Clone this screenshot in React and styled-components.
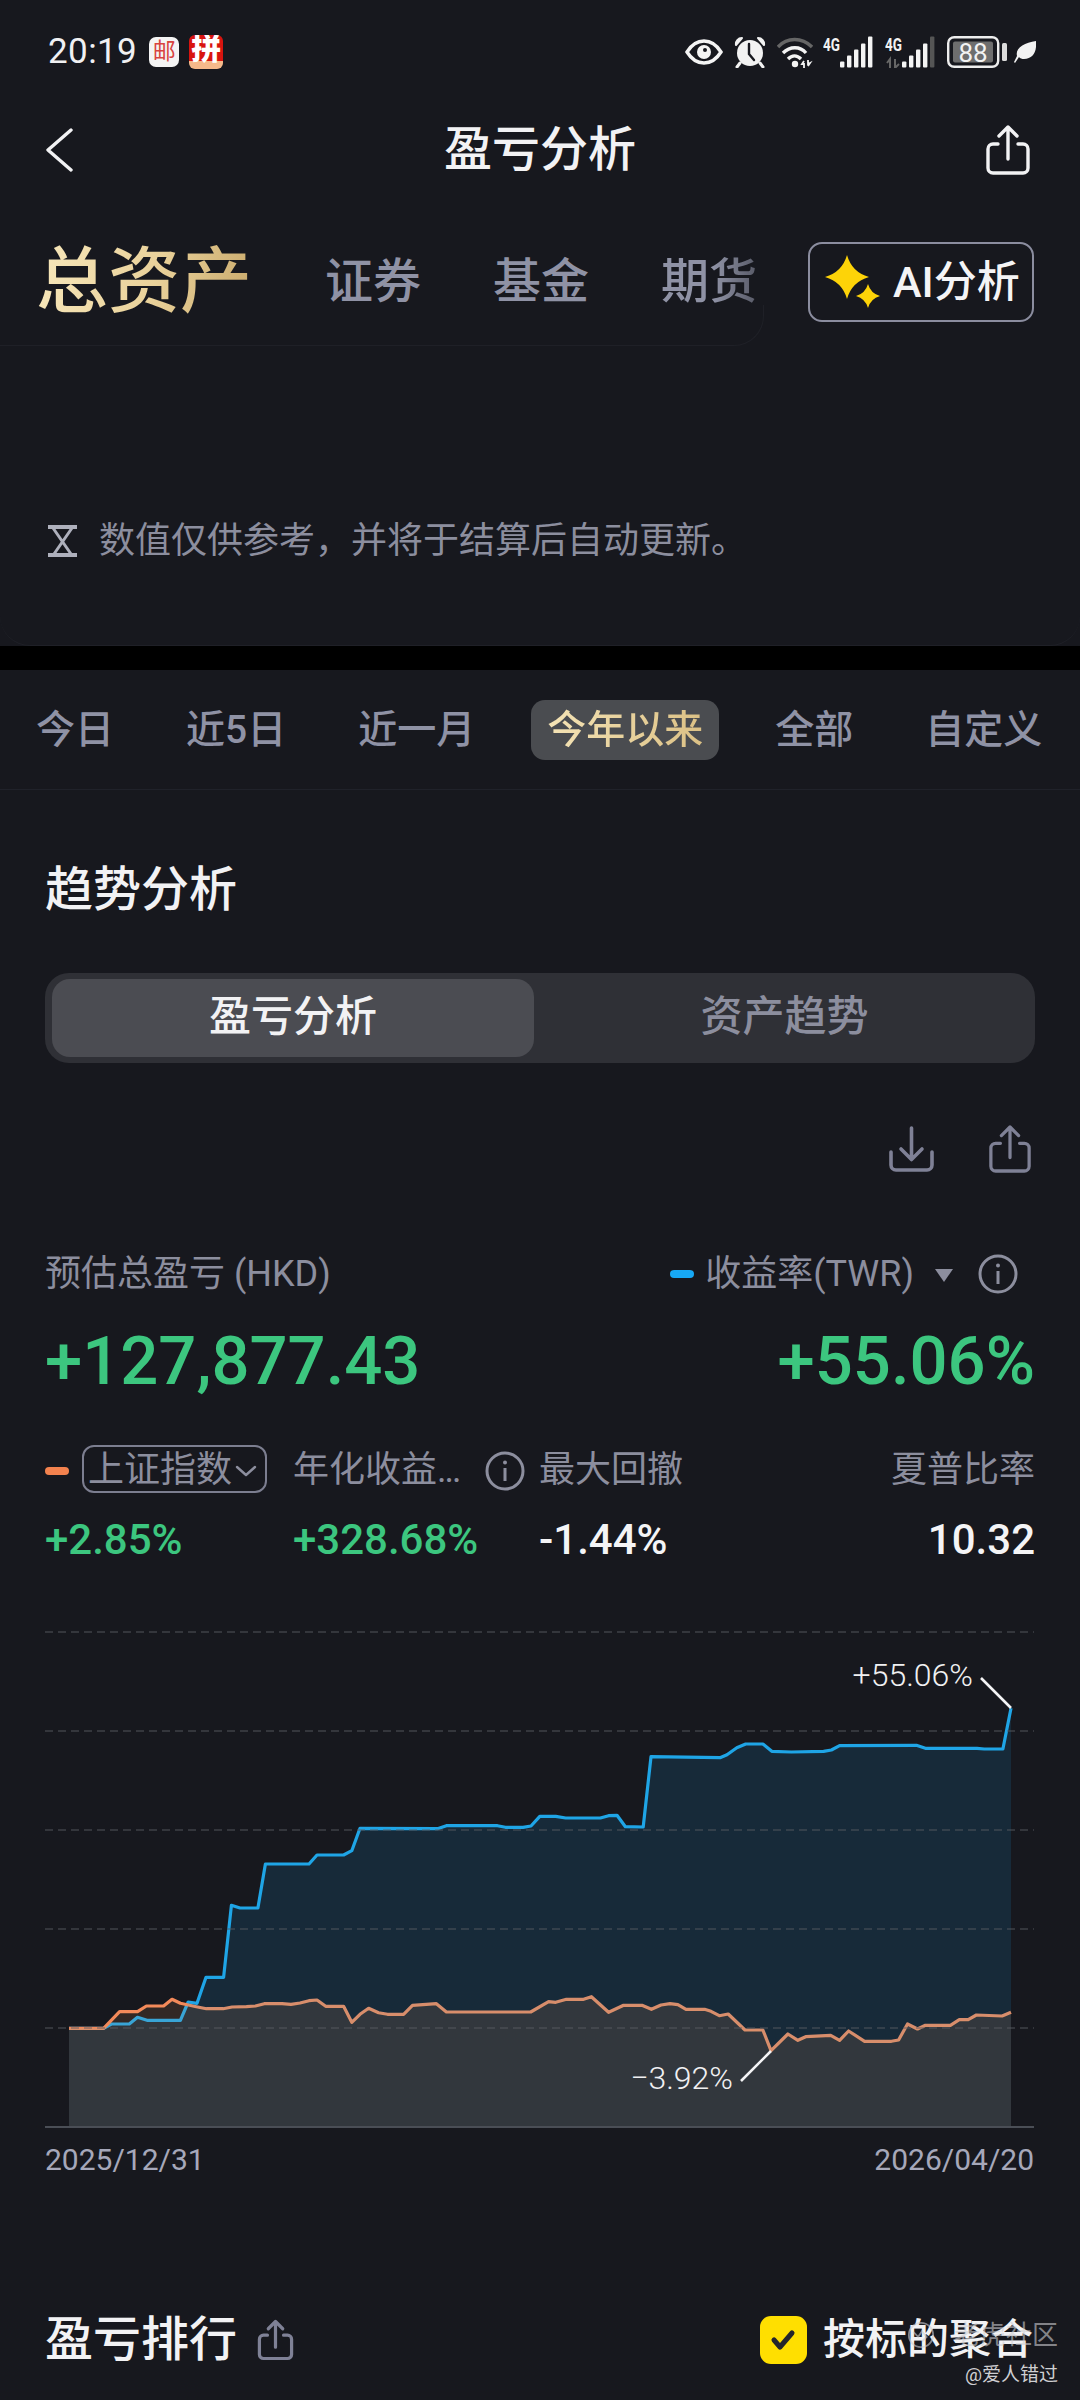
import React from "react";
import styled, { createGlobalStyle } from "styled-components";

const BG = "#17181e";
const Global = createGlobalStyle`
  html, body { margin: 0; padding: 0; background: ${BG}; }
  * { box-sizing: border-box; }
`;

const MUTED = "#8c8e9e";
const GREEN = "#3cc67f";
const EDGE = "#1f2027";

const Page = styled.div`
  position: relative;
  width: 1080px;
  height: 2400px;
  overflow: hidden;
  background: ${BG};
  color: #f2f2f4;
  font-family: Roboto, "Noto Sans CJK SC", sans-serif;
`;
const TopCard = styled.section`
  height: 646px;
  display: flex;
  flex-direction: column;
  border-bottom: 1px solid ${EDGE};
  border-bottom-left-radius: 30px;
  border-bottom-right-radius: 30px;
`;
const StatusBar = styled.div`
  height: 100px;
  display: flex;
  align-items: center;
  justify-content: space-between;
  padding: 4px 44px 0 48px;
`;
const StatusLeft = styled.div`
  display: flex;
  align-items: center;
`;
const Clock = styled.span`
  font-size: 35px;
  line-height: 40px;
  color: #f0f0f2;
  margin-right: 12px;
  letter-spacing: 0.4px;
`;
const MailApp = styled.span`
  width: 30px;
  height: 30px;
  border-radius: 7px;
  background: #f4f4f4;
  color: #d8433f;
  font-size: 23px;
  line-height: 30px;
  text-align: center;
  margin-right: 10px;
`;
const ShopApp = styled.span`
  width: 34px;
  height: 34px;
  border-radius: 6px;
  overflow: hidden;
  background: linear-gradient(#d8140f 0 76%, #f6b98a 76% 100%);
  color: #fff;
  font-size: 30px;
  line-height: 28px;
  font-weight: 900;
  text-align: center;
`;
const StatusIcons = styled.div`
  display: flex;
  align-items: center;
  gap: 10px;
`;
const LeafIcon = styled.svg`
  margin-left: -3px;
`;
const NavBar = styled.header`
  height: 100px;
  display: flex;
  align-items: center;
  justify-content: space-between;
  padding: 0 49px 0 45px;
  position: relative;
`;
const NavTitle = styled.h1`
  position: absolute;
  left: 0;
  right: 0;
  margin: 0;
  text-align: center;
  font-size: 48px;
  line-height: 60px;
  font-weight: 500;
  pointer-events: none;
`;
const TabsRow = styled.nav`
  position: relative;
  margin-top: 42px;
  height: 80px;
  display: flex;
  align-items: center;
  padding: 0 46px 0 36px;
  &::after {
    content: "";
    position: absolute;
    left: 0;
    bottom: -24px;
    width: 763px;
    height: 40px;
    border-bottom: 1px solid ${EDGE};
    border-right: 1px solid ${EDGE};
    border-bottom-right-radius: 30px;
    pointer-events: none;
  }
`;
const MainTab = styled.span`
  font-size: 72px;
  line-height: 80px;
  font-weight: 500;
  background: linear-gradient(100deg, #f7e7bb 0%, #e9d19a 55%, #c9a96b 100%);
  -webkit-background-clip: text;
  background-clip: text;
  color: transparent;
  margin-right: 73px;
`;
const SubTab = styled.span`
  font-size: 48px;
  line-height: 60px;
  font-weight: 500;
  color: #8f92a5;
  margin-right: 72px;
  white-space: nowrap;
  ${(p) => p.$fade && `
    -webkit-mask-image: linear-gradient(90deg, #000 55%, rgba(0,0,0,.55) 100%);
    mask-image: linear-gradient(90deg, #000 55%, rgba(0,0,0,.55) 100%);
    margin-right: 0;
  `}
`;
const AiButton = styled.button`
  margin-left: auto;
  width: 226px;
  height: 80px;
  border: 2px solid #8b8d9f;
  border-radius: 14px;
  background: transparent;
  display: flex;
  align-items: center;
  gap: 12px;
  padding: 0 0 0 15px;
  color: #f4f4f6;
  font: 500 43px/60px Roboto, "Noto Sans CJK SC", sans-serif;
`;
const NoteRow = styled.div`
  margin-top: 201px;
  height: 36px;
  display: flex;
  align-items: center;
  gap: 21px;
  padding-left: 47px;
  font-size: 36px;
  line-height: 36px;
  color: ${MUTED};
`;
const Band = styled.div`
  height: 24px;
  background: #000;
`;
const TimeTabs = styled.nav`
  height: 120px;
  display: flex;
  align-items: flex-start;
  gap: 40px;
  padding: 30px 0 0 20px;
  border-bottom: 1px solid #20222a;
  border-top-left-radius: 30px;
  border-top-right-radius: 30px;
`;
const TimeTab = styled.span`
  height: 60px;
  padding: 0 16px;
  border-radius: 14px;
  font-size: 39px;
  line-height: 60px;
  font-weight: 500;
  color: ${(p) => (p.$active ? "transparent" : "#8f92a5")};
  ${(p) => p.$active && `
    background: linear-gradient(90deg, #f7e7bb, #d9bd80) text, #4a4c50;
    -webkit-background-clip: text, border-box;
    background-clip: text, border-box;
  `}
`;
const Body = styled.div`
  padding: 0 45px;
`;
const SectionTitle = styled.h2`
  margin: 70px 0 0;
  font-size: 48px;
  line-height: 60px;
  font-weight: 500;
`;
const Segment = styled.div`
  margin-top: 53px;
  height: 90px;
  padding: 6px 0 6px 7px;
  border-radius: 24px;
  background: #2f3036;
  display: grid;
  grid-template-columns: 482px 1fr;
`;
const SegmentItem = styled.div`
  border-radius: 18px;
  height: 78px;
  background: ${(p) => (p.$active ? "#4b4c52" : "transparent")};
  color: ${(p) => (p.$active ? "#f2f2f4" : MUTED)};
  font-size: 42px;
  line-height: 76px;
  font-weight: 500;
  text-align: center;
`;
const ToolRow = styled.div`
  margin-top: 61px;
  height: 50px;
  display: flex;
  justify-content: flex-end;
  align-items: center;
  gap: 53px;
  padding-right: 3px;
`;
const SummaryLabels = styled.div`
  margin-top: 78px;
  height: 44px;
  display: flex;
  align-items: center;
  font-size: 36px;
  line-height: 44px;
  color: ${MUTED};
`;
const Dash = styled.i`
  display: block;
  width: 24px;
  height: 8px;
  border-radius: 4px;
  background: ${(p) => p.$color};
`;
const TwrLabel = styled.span`
  margin-left: 11px;
`;
const Caret = styled.span`
  width: 0;
  height: 0;
  margin: 2px 0 0 21px;
  border-left: 9px solid transparent;
  border-right: 9px solid transparent;
  border-top: 13px solid ${MUTED};
`;
const InfoWrap = styled.span`
  display: flex;
  margin-left: ${(p) => p.$left || 0}px;
`;
const Spacer = styled.span`
  flex: 1;
`;
const BigValues = styled.div`
  margin-top: 25px;
  height: 80px;
  display: flex;
  justify-content: space-between;
  align-items: center;
  font-size: 67px;
  line-height: 80px;
  font-weight: 500;
  color: ${GREEN};
`;
const Metrics = styled.div`
  margin-top: 44px;
  display: grid;
  grid-template-columns: 248px 246px 1fr auto;
  grid-template-rows: 48px 50px;
  row-gap: 22px;
  align-items: center;
`;
const MetricLabel = styled.div`
  height: 48px;
  padding-top: 3px;
  display: flex;
  align-items: center;
  font-size: 36px;
  line-height: 45px;
  color: ${MUTED};
  white-space: nowrap;
  justify-content: ${(p) => (p.$end ? "flex-end" : "flex-start")};
`;
const Dots = styled.span`
  letter-spacing: -2px;
`;
const IndexPicker = styled.span`
  margin: -3px 0 0 13px;
  width: 185px;
  height: 48px;
  border: 2px solid #7c7e90;
  border-radius: 12px;
  display: flex;
  align-items: center;
  gap: 3px;
  padding: 3px 0 0 4px;
`;
const MetricValue = styled.div`
  font-size: 42px;
  line-height: 50px;
  font-weight: 500;
  color: ${(p) => (p.$up ? GREEN : "#f4f4f6")};
  text-align: ${(p) => (p.$end ? "right" : "left")};
`;
const ChartSvg = styled.svg`
  display: block;
  margin-top: 55px;
  width: 1080px;
  height: 520px;
`;
const DateRow = styled.div`
  margin-top: 3px;
  height: 34px;
  padding: 0 46px 0 45px;
  display: flex;
  justify-content: space-between;
  font-size: 30px;
  line-height: 34px;
  color: #a6a8ba;
`;
const RankRow = styled.div`
  margin-top: 138px;
  height: 50px;
  padding: 0 47px 0 45px;
  display: flex;
  align-items: center;
`;
const RankTitle = styled.h2`
  margin: 0 20px 0 0;
  font-size: 48px;
  line-height: 50px;
  font-weight: 500;
`;
const Check = styled.span`
  margin-left: auto;
  width: 47px;
  height: 48px;
  border-radius: 11px;
  background: #ffdf00;
  display: flex;
  align-items: center;
  justify-content: center;
`;
const CheckLabel = styled.span`
  margin-left: 16px;
  font-size: 42px;
  line-height: 50px;
  font-weight: 500;
`;
const Watermark = styled.div`
  position: absolute;
  right: 22px;
  top: 2315px;
  display: flex;
  flex-direction: column;
  align-items: flex-end;
`;
const MarkBrand = styled.div`
  display: flex;
  align-items: center;
  gap: 19px;
  font-size: 26px;
  line-height: 40px;
  color: rgba(205, 205, 210, 0.6);
`;
const MarkUser = styled.div`
  margin-top: 7px;
  font-size: 19px;
  line-height: 26px;
  color: #cfcfd2;
`;

const Share = ({ w = 46, h = 52, color = "#f2f2f4", sw = 3.4 }) => (
  <svg width={w} height={h} viewBox="0 0 46 52" fill="none" stroke={color} strokeWidth={sw} strokeLinecap="round" strokeLinejoin="round">
    <path d="M13 20H8a5 5 0 0 0-5 5v19a5 5 0 0 0 5 5h30a5 5 0 0 0 5-5V25a5 5 0 0 0-5-5h-5" />
    <path d="M23 35V3M14 12l9-9 9 9" />
  </svg>
);
const Download = () => (
  <svg width="47" height="46" viewBox="0 0 47 46" fill="none" stroke="#7f8196" strokeWidth="3.6" strokeLinecap="round" strokeLinejoin="round">
    <path d="M3 26v13a5 5 0 0 0 5 5h31a5 5 0 0 0 5-5V26" />
    <path d="M23.5 2v31M13 23l10.5 10.5L34 23" />
  </svg>
);
const Info = () => (
  <svg width="40" height="40" viewBox="0 0 40 40" fill="none" stroke={MUTED} strokeWidth="3">
    <circle cx="20" cy="20" r="18" />
    <circle cx="20" cy="11.5" r="2" fill={MUTED} stroke="none" />
    <path d="M20 17v13" />
  </svg>
);
const star = (cx, cy, rx, ry) =>
  `M${cx} ${cy - ry}Q${cx + rx * 0.22} ${cy - ry * 0.22} ${cx + rx} ${cy}Q${cx + rx * 0.22} ${cy + ry * 0.22} ${cx} ${cy + ry}Q${cx - rx * 0.22} ${cy + ry * 0.22} ${cx - rx} ${cy}Q${cx - rx * 0.22} ${cy - ry * 0.22} ${cx} ${cy - ry}Z`;
const Sparkle = () => (
  <svg width="56" height="54" viewBox="0 0 56 54">
    <path d={star(22, 22, 22, 22)} fill="#fdd308" />
    <path d={star(43, 41, 12, 12)} fill="#fdd308" />
  </svg>
);
const Eye = () => (
  <svg width="38" height="26" viewBox="0 0 38 26" fill="none">
    <path d="M2 13C7 5 13 2 19 2s12 3 17 11c-5 8-11 11-17 11S7 21 2 13Z" stroke="#f4f4f4" strokeWidth="3.4" />
    <circle cx="19" cy="13" r="7" fill="#f4f4f4" />
    <circle cx="20" cy="11" r="2" fill={BG} />
  </svg>
);
const Alarm = () => (
  <svg width="34" height="32" viewBox="0 0 34 32" fill="none">
    <circle cx="17" cy="17" r="13" fill="#f2f2f2" />
    <path d="M3 9a6 6 0 0 1 6-7ZM31 9a6 6 0 0 0-6-7Z" fill="#f2f2f2" stroke="#f2f2f2" strokeWidth="2" strokeLinejoin="round" />
    <path d="M16 8v10l5 6" stroke={BG} strokeWidth="2.4" strokeLinecap="round" />
    <path d="M7 27l-3 4M27 27l3 4" stroke="#f2f2f2" strokeWidth="3" strokeLinecap="round" />
  </svg>
);
const Wifi = () => (
  <svg width="36" height="32" viewBox="0 0 36 32" fill="none" strokeLinecap="butt">
    <path d="M1 11C10 1 25 1 35 11" stroke="#666" strokeWidth="3.4" />
    <path d="M6 17c7-7 17-7 23 0" stroke="#f4f4f4" strokeWidth="3.4" />
    <path d="M11 23c4-4 9-4 13 0" stroke="#f4f4f4" strokeWidth="3.4" />
    <circle cx="18" cy="28" r="3.2" fill="#f4f4f4" />
    <path d="M27 25l-2 3h2v4M31 24v4l2-1-2 3" stroke="#f4f4f4" strokeWidth="1.8" />
  </svg>
);
const Signal = ({ dim }) => (
  <svg width="52" height="32" viewBox="0 0 52 32">
    <text x="0" y="15" fill="#f2f2f2" fontSize="18" fontWeight="700" fontFamily="Roboto, sans-serif" textLength="17" lengthAdjust="spacingAndGlyphs">4G</text>
    {dim && <path d="M2 27l3-4v9M10 23v9l4-4" stroke="#666" strokeWidth="2" fill="none" />}
    {[[17, 6], [24, 12], [31, 18], [38, 24], [45, 31]].map(([x, h], i) => (
      <rect key={x} x={x} y={31.5 - h} width="4.4" height={h} rx="1" fill={dim && i === 4 ? "#555" : "#f4f4f4"} />
    ))}
  </svg>
);
const Battery = () => (
  <svg width="60" height="32" viewBox="0 0 60 32">
    <rect x="1.2" y="1.2" width="50" height="29.6" rx="6" fill="none" stroke="#ededed" strokeWidth="2.4" />
    <rect x="6" y="5.5" width="40" height="21" rx="2" fill="#6e6e6e" />
    <text x="26" y="25.5" textAnchor="middle" fill="#f2f2f2" fontSize="26" fontFamily="Roboto, sans-serif">88</text>
    <rect x="55" y="7" width="5" height="18" rx="1.5" fill="#dcdcdc" />
  </svg>
);
const Leaf = () => (
  <LeafIcon width="22" height="22" viewBox="0 0 22 22">
    <path d="M22 0c1 11-3 18-12 18-2 0-4-.5-5-2L1 22l-1-1 3-6C1 7 10 2 22 0Z" fill="#f2f2f2" />
  </LeafIcon>
);
const Hourglass = () => (
  <svg width="31" height="32" viewBox="0 0 31 32" fill="none" stroke="#aeb0bc">
    <path d="M1 2h29M1 30h29" strokeWidth="4" />
    <path d="M6 3l18 26M25 3L7 29" strokeWidth="3" />
  </svg>
);

const blue = [[69,2028.3],[103.6,2028.3],[111.4,2024],[129.3,2024],[137.5,2017.3],[147,2020.3],[180.4,2020.3],[188.2,2002],[197,2003.3],[206,1977.3],[223.6,1977.3],[231.4,1905.3],[240,1908],[257.9,1908],[265.4,1864],[309,1864],[317,1855],[343.6,1855],[351.8,1850.7],[360,1828.3],[437.5,1828.7],[446.4,1825.7],[497.5,1825.7],[505.4,1827.3],[523,1827.3],[531,1826],[539.8,1816.3],[555.7,1816.3],[565.7,1818],[600.4,1818],[608.6,1815.7],[617,1815.3],[625.4,1826.7],[643.2,1827],[651,1756.7],[720,1757.7],[727,1754.7],[736.8,1747.7],[745.7,1744],[762.9,1744],[771.8,1751.3],[791.4,1752],[823.6,1751.3],[831.4,1750],[839.6,1745.7],[916.4,1745.3],[925.4,1748.3],[977,1748.3],[984.3,1749],[1002.9,1749],[1011,1708.3]];
const orange = [[69,2028.3],[103.6,2028.3],[119.6,2011.7],[137.5,2011.7],[146.4,2006],[163.6,2006],[172,1999.3],[180.4,2003.3],[196.4,2006.7],[206.4,2008.7],[223.2,2008.7],[232,2007],[246.4,2006.7],[255.4,2006],[264.3,2003.7],[282,2003.7],[291,2004.3],[300,2003],[309,2000.7],[317,2000],[325.7,2006.3],[343.6,2006.3],[351.8,2022.3],[360,2014.3],[368.6,2008.3],[378.6,2012.7],[387.5,2014.3],[403.6,2014.3],[412.5,2005.3],[436.4,2003.7],[446.4,2012],[530.7,2012],[548.6,2001.7],[555.7,2002.3],[566.4,1999.3],[583.6,1999.3],[591.4,1996.7],[608.6,2012.3],[623.6,2005.3],[642,2005.3],[651.4,2009.3],[661,2005],[670,2003.7],[677.9,2004.7],[686,2009.3],[704.6,2009.3],[711,2011.3],[719.3,2015.7],[728.2,2014],[745,2030],[762.9,2030],[771,2050.7],[787.9,2034],[797.9,2040.3],[805.7,2036.7],[830.7,2035.3],[839.6,2040.3],[848.6,2031],[864.6,2041.3],[891.4,2041.3],[898.6,2040],[907.5,2024],[917.5,2029],[925.4,2025.3],[950.4,2025.3],[959.3,2019.7],[968.2,2019.7],[976.4,2015],[1002.1,2016],[1011,2012.3]];
const toLine = (pts) => pts.map(([x, y], i) => `${i ? "L" : "M"}${x} ${y}`).join("");
const toArea = (pts) => `${toLine(pts)}L1011 2126L69 2126Z`;
const grid = [1632, 1731, 1830, 1929, 2028];

const Chart = () => (
  <ChartSvg viewBox="0 1620 1080 520">
    <path d={toLine(blue)} fill="none" stroke="#20a5e6" strokeWidth="3.2" strokeLinejoin="round" />
    <path d={toLine(orange)} fill="none" stroke="#f3895a" strokeWidth="3.2" strokeLinejoin="round" />
    <path d={toArea(blue)} fill="rgba(26,167,238,0.13)" />
    <path d={toArea(orange)} fill="rgba(250,160,90,0.12)" />
    {grid.map((y) => (
      <line key={y} x1="45" x2="1034" y1={y} y2={y} stroke="#5a5c62" strokeOpacity="0.6" strokeWidth="1.6" strokeDasharray="8 5" />
    ))}
    <line x1="45" x2="1034" y1="2127" y2="2127" stroke="#4a4e56" strokeWidth="2" />
    <path d="M981 1678L1011 1708M741 2081L771 2051" stroke="#f4f4f6" strokeWidth="2.6" fill="none" />
    <text x="973" y="1686" textAnchor="end" fill="#f0f0f2" fontSize="32" fontWeight="300" fontFamily="Roboto, sans-serif">+55.06%</text>
    <text x="733" y="2089" textAnchor="end" fill="#f0f0f2" fontSize="32" fontWeight="300" fontFamily="Roboto, sans-serif">−3.92%</text>
  </ChartSvg>
);

export default function App() {
  return (
    <Page>
      <Global />
      <TopCard>
        <StatusBar>
          <StatusLeft>
            <Clock>20:19</Clock>
            <MailApp>邮</MailApp>
            <ShopApp>拼</ShopApp>
          </StatusLeft>
          <StatusIcons>
            <Eye />
            <Alarm />
            <Wifi />
            <Signal />
            <Signal dim />
            <Battery />
            <Leaf />
          </StatusIcons>
        </StatusBar>
        <NavBar>
          <svg width="28" height="44" viewBox="0 0 28 44" fill="none" stroke="#f2f2f4" strokeWidth="3.4" strokeLinecap="round" strokeLinejoin="round">
            <path d="M26 2L3 22l23 20" />
          </svg>
          <NavTitle>盈亏分析</NavTitle>
          <Share />
        </NavBar>
        <TabsRow>
          <MainTab>总资产</MainTab>
          <SubTab>证券</SubTab>
          <SubTab>基金</SubTab>
          <SubTab $fade>期货</SubTab>
          <AiButton>
            <Sparkle />
            AI分析
          </AiButton>
        </TabsRow>
        <NoteRow>
          <Hourglass />
          数值仅供参考，并将于结算后自动更新。
        </NoteRow>
      </TopCard>
      <Band />
      <TimeTabs>
        <TimeTab>今日</TimeTab>
        <TimeTab>近5日</TimeTab>
        <TimeTab>近一月</TimeTab>
        <TimeTab $active>今年以来</TimeTab>
        <TimeTab>全部</TimeTab>
        <TimeTab>自定义</TimeTab>
      </TimeTabs>
      <Body>
        <SectionTitle>趋势分析</SectionTitle>
        <Segment>
          <SegmentItem $active>盈亏分析</SegmentItem>
          <SegmentItem>资产趋势</SegmentItem>
        </Segment>
        <ToolRow>
          <Download />
          <Share w={44} h={50} color="#7f8196" />
        </ToolRow>
        <SummaryLabels>
          <span>预估总盈亏 (HKD)</span>
          <Spacer />
          <Dash $color="#17a8f5" />
          <TwrLabel>收益率(TWR)</TwrLabel>
          <Caret />
          <InfoWrap $left={25}><Info /></InfoWrap>
          <InfoWrap $left={17} />
        </SummaryLabels>
        <BigValues>
          <span>+127,877.43</span>
          <span>+55.06%</span>
        </BigValues>
        <Metrics>
          <MetricLabel>
            <Dash $color="#f3824e" />
            <IndexPicker>
              上证指数
              <svg width="22" height="12" viewBox="0 0 22 12" fill="none" stroke={MUTED} strokeWidth="2.4" strokeLinecap="round" strokeLinejoin="round">
                <path d="M2 2l9 8 9-8" />
              </svg>
            </IndexPicker>
          </MetricLabel>
          <MetricLabel>
            年化收益<Dots>...</Dots>
            <InfoWrap $left={25}><Info /></InfoWrap>
          </MetricLabel>
          <MetricLabel>最大回撤</MetricLabel>
          <MetricLabel $end>夏普比率</MetricLabel>
          <MetricValue $up>+2.85%</MetricValue>
          <MetricValue $up>+328.68%</MetricValue>
          <MetricValue>-1.44%</MetricValue>
          <MetricValue $end>10.32</MetricValue>
        </Metrics>
      </Body>
      <Chart />
      <DateRow>
        <span>2025/12/31</span>
        <span>2026/04/20</span>
      </DateRow>
      <RankRow>
        <RankTitle>盈亏排行</RankTitle>
        <Share w={37} h={42} color="#7f8196" sw={4} />
        <Check>
          <svg width="26" height="22" viewBox="0 0 26 22" fill="none" stroke="#24252b" strokeWidth="5" strokeLinecap="round" strokeLinejoin="round">
            <path d="M4 11l6 7L22 4" />
          </svg>
        </Check>
        <CheckLabel>按标的聚合</CheckLabel>
      </RankRow>
      <Watermark>
        <MarkBrand>
          <svg width="28" height="28" viewBox="0 0 30 30" fill="none" stroke="rgba(205,205,210,.6)" strokeWidth="2">
            <circle cx="15" cy="15" r="13" />
            <path d="M7 12l5 5 4-6 5 6-5 5" />
          </svg>
          老虎社区
        </MarkBrand>
        <MarkUser>@爱人错过</MarkUser>
      </Watermark>
    </Page>
  );
}
